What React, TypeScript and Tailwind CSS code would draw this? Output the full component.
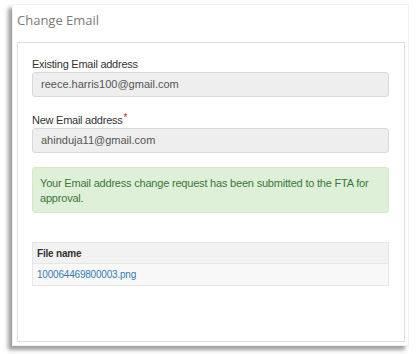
export default function App() {
    return (
        <div className="w-[416px] h-[354px] bg-white pt-[4px] pl-[12px]" style={{ fontFamily: '"Liberation Sans", Arial, sans-serif' }}>
            <div className="w-[397px] h-[342px] bg-white border border-[#f0f0f0] shadow-[-4px_4px_4px_rgba(0,0,0,0.38)] pl-[4px] flex flex-col">
                <div className="h-[37px] pt-[6px] text-[13px] text-[#7a7a7a] leading-[18px]" style={{ fontFamily: '"Open Sans", sans-serif' }}>
                    Change Email
                </div>
                <div className="w-[388px] h-[300px] border border-[#dedede] pt-[14px] pl-[14px]">
                    <div className="w-[357px]">
                        <div className="text-[11px] tracking-[-0.25px] text-[#333] leading-[14px] mb-[1px]">Existing Email address</div>
                        <div className="h-[25px] bg-[#eeeeee] border border-[#d9d9d9] rounded-[3px] pl-[8px] flex items-center text-[11px] text-[#555]">
                            reece.harris100@gmail.com
                        </div>
                        <div className="text-[11px] tracking-[-0.25px] text-[#333] leading-[14px] mt-[16px] mb-[1px]">
                            New Email address<span className="text-[#e02020] align-top text-[10px] leading-[10px] ml-[1px]">*</span>
                        </div>
                        <div className="h-[25px] bg-[#eeeeee] border border-[#d9d9d9] rounded-[3px] pl-[8px] flex items-center text-[11px] text-[#555]">
                            ahinduja11@gmail.com
                        </div>
                        <div className="mt-[14px] h-[46px] bg-[#dff0d8] border border-[#d6e9c6] rounded-[3px] pl-[7px] pr-[6px] pt-[8px] text-[11px] tracking-[-0.2px] leading-[15px] text-[#3c763d]">
                            Your Email address change request has been submitted to the FTA for approval.
                        </div>
                        <div className="mt-[29px] border border-[#e6e6e6] text-[10px]">
                            <div className="h-[21px] bg-[#f2f2f2] border-b border-[#e6e6e6] pl-[4px] flex items-center font-bold text-[#333] tracking-[-0.2px]">File name</div>
                            <div className="h-[21px] bg-[#f8f8f8] pl-[4px] flex items-center text-[#337ab7] tracking-[-0.2px]">100064469800003.png</div>
                        </div>
                    </div>
                </div>
            </div>
        </div>
    );
}
